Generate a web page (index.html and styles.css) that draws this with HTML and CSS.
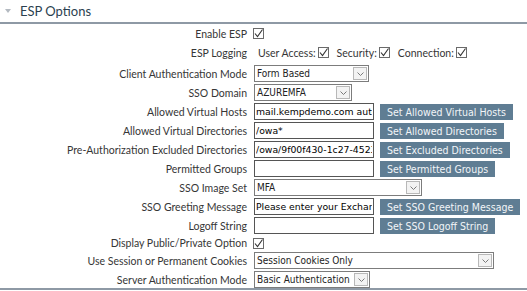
FILE: index.html
```html
<!DOCTYPE html>
<html lang="en">
<head>
    <meta charset="UTF-8">
    <meta name="viewport" content="width=device-width, initial-scale=1.0">
    <title>ESP Options</title>
    <link rel="stylesheet" href="styles.css">
</head>
<body>
    <div class="panel">
        <div class="panel-head">
            <span class="caret"></span>
            <h2>ESP Options</h2>
        </div>

        <div class="form">
            <div class="row">
                <label>Enable ESP</label>
                <svg class="check" width="11" height="11" viewBox="0 0 11 11"><rect x="0.5" y="0.5" width="10" height="10"/><polyline points="2,5.5 4.5,8.5 9.5,1.5"/></svg>
            </div>

            <div class="row row-logging">
                <label>ESP Logging</label>
                <div class="log-opts">
                    <span class="opt">User Access:<svg class="check" width="11" height="11" viewBox="0 0 11 11"><rect x="0.5" y="0.5" width="10" height="10"/><polyline points="2,5.5 4.5,8.5 9.5,1.5"/></svg></span>
                    <span class="opt">Security:<svg class="check" width="11" height="11" viewBox="0 0 11 11"><rect x="0.5" y="0.5" width="10" height="10"/><polyline points="2,5.5 4.5,8.5 9.5,1.5"/></svg></span>
                    <span class="opt">Connection:<svg class="check" width="11" height="11" viewBox="0 0 11 11"><rect x="0.5" y="0.5" width="10" height="10"/><polyline points="2,5.5 4.5,8.5 9.5,1.5"/></svg></span>
                </div>
            </div>

            <div class="row">
                <label>Client Authentication Mode</label>
                <div class="select w-cam">
                    <span class="val">Form Based</span>
                    <span class="arrow"><svg width="7" height="4" viewBox="0 0 7 4"><polyline points="0.5,0.5 3.5,3.5 6.5,0.5"/></svg></span>
                </div>
            </div>

            <div class="row">
                <label>SSO Domain</label>
                <div class="select w-domain">
                    <span class="val">AZUREMFA</span>
                    <span class="arrow"><svg width="7" height="4" viewBox="0 0 7 4"><polyline points="0.5,0.5 3.5,3.5 6.5,0.5"/></svg></span>
                </div>
            </div>

            <div class="row">
                <label>Allowed Virtual Hosts</label>
                <input type="text" value="mail.kempdemo.com autodiscover.kempdemo.com">
                <button class="btn">Set Allowed Virtual Hosts</button>
            </div>

            <div class="row">
                <label>Allowed Virtual Directories</label>
                <input type="text" value="/owa*">
                <button class="btn">Set Allowed Directories</button>
            </div>

            <div class="row">
                <label>Pre-Authorization Excluded Directories</label>
                <input type="text" value="/owa/9f00f430-1c27-4523-a0a1">
                <button class="btn">Set Excluded Directories</button>
            </div>

            <div class="row">
                <label>Permitted Groups</label>
                <input type="text" value="">
                <button class="btn">Set Permitted Groups</button>
            </div>

            <div class="row">
                <label>SSO Image Set</label>
                <div class="select w-image">
                    <span class="val">MFA</span>
                    <span class="arrow"><svg width="7" height="4" viewBox="0 0 7 4"><polyline points="0.5,0.5 3.5,3.5 6.5,0.5"/></svg></span>
                </div>
            </div>

            <div class="row">
                <label>SSO Greeting Message</label>
                <input type="text" value="Please enter your Exchange credentials">
                <button class="btn">Set SSO Greeting Message</button>
            </div>

            <div class="row">
                <label>Logoff String</label>
                <input type="text" value="">
                <button class="btn">Set SSO Logoff String</button>
            </div>

            <div class="row row-short">
                <label>Display Public/Private Option</label>
                <svg class="check" width="11" height="11" viewBox="0 0 11 11"><rect x="0.5" y="0.5" width="10" height="10"/><polyline points="2,5.5 4.5,8.5 9.5,1.5"/></svg>
            </div>

            <div class="row">
                <label>Use Session or Permanent Cookies</label>
                <div class="select w-session">
                    <span class="val">Session Cookies Only</span>
                    <span class="arrow"><svg width="7" height="4" viewBox="0 0 7 4"><polyline points="0.5,0.5 3.5,3.5 6.5,0.5"/></svg></span>
                </div>
            </div>

            <div class="row">
                <label>Server Authentication Mode</label>
                <div class="select w-basic">
                    <span class="val">Basic Authentication</span>
                    <span class="arrow"><svg width="7" height="4" viewBox="0 0 7 4"><polyline points="0.5,0.5 3.5,3.5 6.5,0.5"/></svg></span>
                </div>
            </div>
        </div>
    </div>
</body>
</html>
```

FILE: styles.css
```css
body {
    margin: 0;
    background-color: #ffffff;
    font-family: Lato, "Noto Sans", sans-serif;
}

.panel {
    width: 527px;
}

.panel-head {
    display: flex;
    align-items: center;
    height: 22px;
    padding-left: 5px;
    border-bottom: 2px solid #8e99a5;
}

.caret {
    width: 0;
    height: 0;
    border-left: 3px solid transparent;
    border-right: 3px solid transparent;
    border-top: 4px solid #b4bac1;
    margin-right: 9px;
}

.panel-head h2 {
    margin: 0;
    font-size: 13px;
    font-weight: normal;
    color: #2c3f50;
}

.form {
    padding-top: 1px;
    border-bottom: 2px solid #8e99a5;
}

.row {
    display: flex;
    align-items: center;
    height: 17px;
    margin-bottom: 2px;
}

.row:last-child {
    margin-bottom: 0;
}

.row-logging {
    margin-bottom: 4px;
}

.row-short {
    height: 14px;
}

.row label {
    width: 247px;
    margin-right: 7px;
    flex-shrink: 0;
    text-align: right;
    font-size: 10.5px;
    color: #363636;
}

.check {
    display: block;
    margin-left: -1px;
}

.check rect {
    fill: #ffffff;
    stroke: #6a6a6a;
}

.check polyline {
    fill: none;
    stroke: #333333;
    stroke-width: 1.1;
}

.log-opts {
    display: flex;
    align-items: center;
    gap: 8px;
    padding-left: 4px;
}

.opt {
    display: flex;
    align-items: center;
    gap: 1px;
    font-size: 10.5px;
    color: #363636;
}

.opt .check {
    margin-left: 1px;
}

.select {
    display: flex;
    align-items: stretch;
    height: 17px;
    box-sizing: border-box;
    border: 1px solid #7c7c7c;
    background-color: #ffffff;
}

.select .val {
    flex: 1;
    padding-left: 2px;
    overflow: hidden;
    white-space: nowrap;
    font-family: "DejaVu Sans Condensed", "Liberation Sans", sans-serif;
    font-size: 10px;
    line-height: 15px;
    color: #222222;
}

.select .arrow {
    display: flex;
    align-items: center;
    justify-content: center;
    width: 12px;
    margin: 1px;
    border: 1px solid #b8b8b8;
    background-color: #f3f3f3;
}

.select .arrow polyline {
    fill: none;
    stroke: #7a7a7a;
    stroke-width: 1;
}

.w-cam { width: 115px; }
.w-domain { width: 98px; }
.w-image { width: 168px; }
.w-session { width: 240px; }
.w-basic { width: 116px; }

input[type="text"] {
    width: 120px;
    height: 17px;
    box-sizing: border-box;
    margin: 0;
    padding: 0 1px;
    border: 1px solid #555555;
    font-family: "DejaVu Sans", Verdana, sans-serif;
    font-size: 9.3px;
    color: #000000;
}

.btn {
    height: 16px;
    margin-left: 6px;
    padding: 0 7px;
    border: none;
    background-color: #5f7d93;
    color: #f2f5f8;
    font-family: "DejaVu Sans Condensed", "Liberation Sans", sans-serif;
    font-size: 10.5px;
    line-height: 16px;
    white-space: nowrap;
}
```
